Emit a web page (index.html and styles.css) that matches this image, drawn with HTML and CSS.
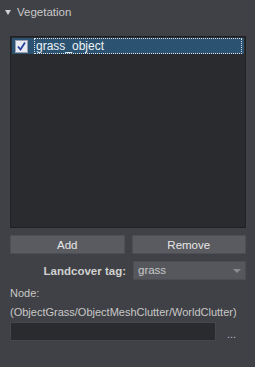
FILE: index.html
```html
<!DOCTYPE html>
<html>
<head>
    <title>Vegetation</title>
    <link rel="stylesheet" href="styles.css">
</head>
<body>
    <div class="panel">
        <div class="section-header">
            <span class="arrow"></span>
            <span>Vegetation</span>
        </div>

        <div class="list-box">
            <div class="list-item selected">
                <span class="check">
                    <svg width="11" height="11" viewBox="0 0 11 11">
                        <path d="M2 5.5 L4.5 8.5 L9 1.5" fill="none" stroke="#2a3f9a" stroke-width="1.8"/>
                    </svg>
                </span>
                <span class="item-label">grass_object</span>
            </div>
        </div>

        <div class="button-row">
            <button class="btn">Add</button>
            <button class="btn">Remove</button>
        </div>

        <div class="field-row">
            <label class="field-label">Landcover tag:</label>
            <div class="combo">
                <span>grass</span>
                <span class="combo-arrow"></span>
            </div>
        </div>

        <div class="node-label">Node:</div>
        <div class="node-path">(ObjectGrass/ObjectMeshClutter/WorldClutter)</div>

        <div class="node-row">
            <div class="node-input"></div>
            <span class="dots">...</span>
        </div>
    </div>
</body>
</html>
```

FILE: styles.css
```css
body {
    margin: 0;
    padding: 0;
    background-color: #404146;
    font-family: "Liberation Sans", Arial, sans-serif;
    font-size: 11px;
    color: #d8d8d8;
}

.panel {
    width: 255px;
    height: 367px;
    box-sizing: border-box;
    padding: 0 9px 0 10px;
}

.section-header {
    display: flex;
    align-items: center;
    height: 24px;
    margin-left: -5px;
    gap: 6px;
    font-size: 11.5px;
    color: #c8c8c8;
}

.arrow {
    width: 0;
    height: 0;
    border-left: 3.5px solid transparent;
    border-right: 3.5px solid transparent;
    border-top: 5px solid #d0d0d0;
}

.list-box {
    margin-top: 12px;
    height: 188px;
    background: #2a2b2f;
    border: 1px solid #1f2023;
    padding: 1px;
}

.list-item {
    display: flex;
    align-items: center;
    height: 16px;
}

.list-item.selected {
    background: #2b5371;
}

.check {
    display: flex;
    align-items: center;
    justify-content: center;
    width: 11px;
    height: 11px;
    margin: 0 6px 0 3px;
    background: #e8ebf2;
    border: 1px solid #9aa0b0;
}

.item-label {
    flex: 1;
    height: 14px;
    line-height: 14px;
    padding-left: 1px;
    margin-right: 2px;
    border: 1px dotted #d8dde8;
    font-size: 12px;
    color: #eef2f6;
}

.button-row {
    display: flex;
    gap: 7px;
    margin-top: 7px;
}

.btn {
    flex: 1;
    height: 19px;
    padding: 0;
    background: #5a5b60;
    border: 1px solid #4e4f54;
    border-radius: 1px;
    color: #e6e6e6;
    font-family: "Liberation Sans", Arial, sans-serif;
    font-size: 11.5px;
}

.field-row {
    display: flex;
    align-items: center;
    gap: 7px;
    margin-top: 7px;
}

.field-label {
    flex: 1;
    text-align: right;
    font-weight: bold;
    color: #d0d0d0;
    font-size: 11.5px;
}

.combo {
    position: relative;
    width: 113px;
    height: 19px;
    box-sizing: border-box;
    background: #56575c;
    border: 1px solid #4c4d52;
    padding-left: 4px;
    line-height: 17px;
    font-size: 11.5px;
    color: #c8c8c8;
}

.combo-arrow {
    position: absolute;
    right: 4px;
    top: 7px;
    width: 0;
    height: 0;
    border-left: 4px solid transparent;
    border-right: 4px solid transparent;
    border-top: 4px solid #8a8b90;
}

.node-label {
    margin-top: 6px;
    line-height: 14px;
    color: #c8c8c8;
}

.node-path {
    margin-top: 5px;
    line-height: 14px;
    color: #c8c8c8;
}

.node-row {
    display: flex;
    align-items: center;
    margin-top: 3px;
}

.node-input {
    width: 206px;
    height: 19px;
    box-sizing: border-box;
    background: #2a2b2f;
    border: 1px solid #46474c;
}

.dots {
    margin-left: 11px;
    margin-top: 4px;
    color: #b8b8c8;
}
```
